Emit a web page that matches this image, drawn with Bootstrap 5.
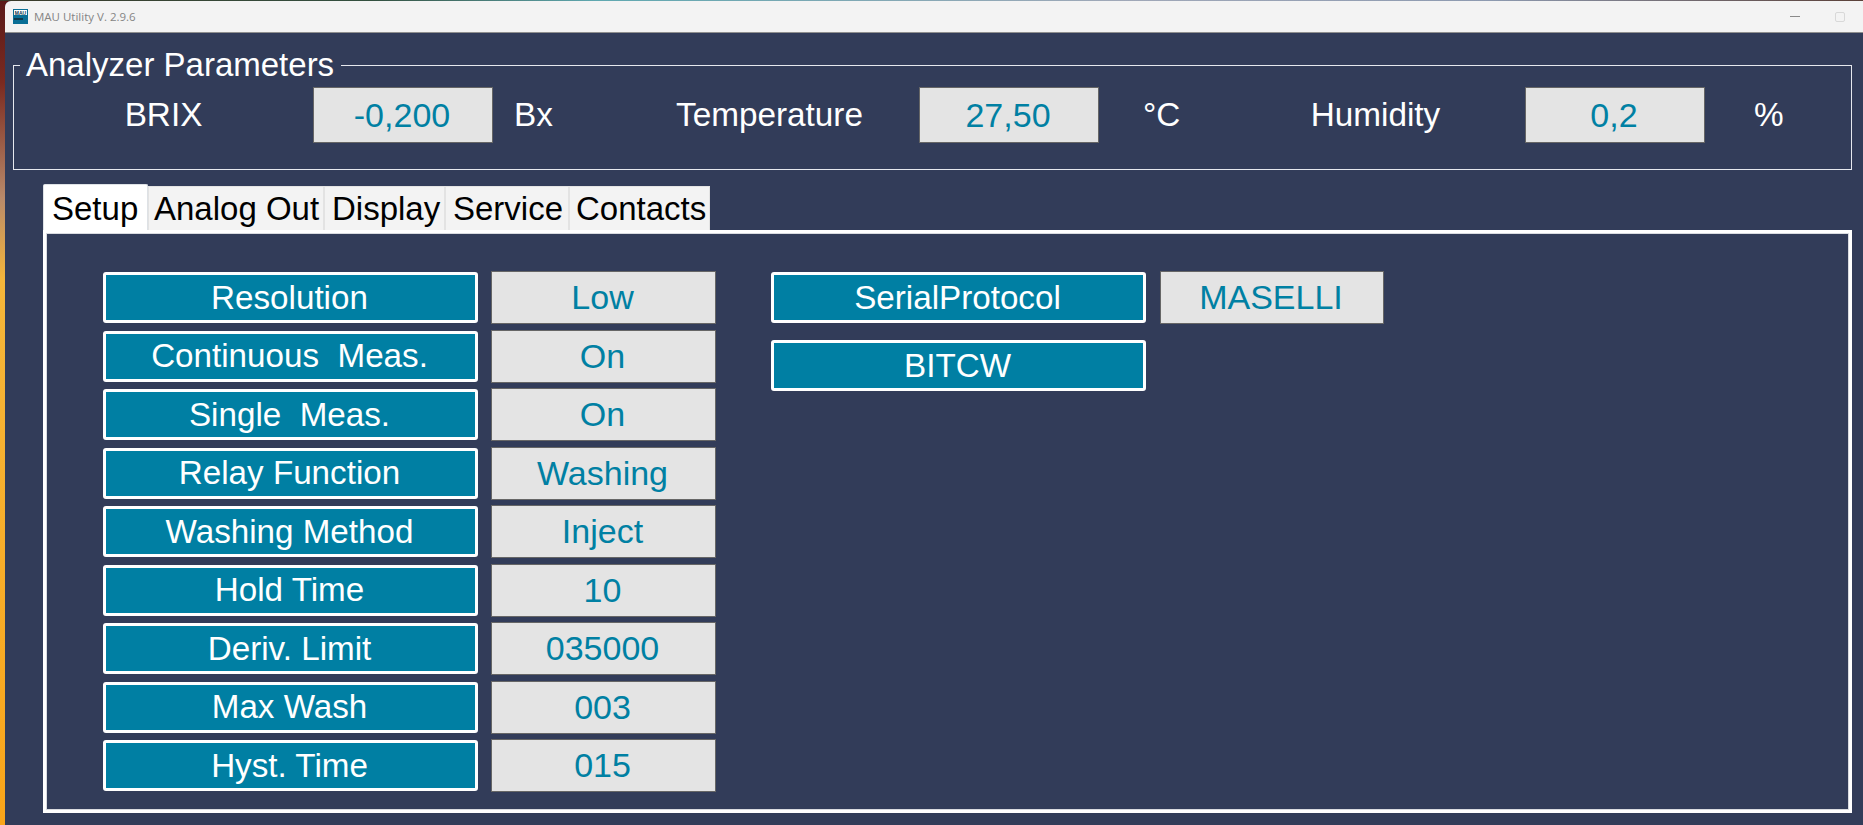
<!DOCTYPE html>
<html lang="en">

<head>
    <meta charset="UTF-8">
    <meta name="viewport" content="width=device-width, initial-scale=1.0">
    <title>MAU Utility V. 2.9.6</title>

    <!-- Bootstrap CSS -->
    <link href="https://cdn.jsdelivr.net/npm/bootstrap@5.3.0/dist/css/bootstrap.min.css" rel="stylesheet">
    <style>
        html, body { height: 100%; }
        body {
            overflow: hidden;
            padding: 1px 0 0 5px;
            background:
                linear-gradient(90deg, #3a3a2a 0, #33503f 20%, #5fa8b0 32%, #a0a8b8 60%, #8d9ab0 80%, #5a4038 100%) 0 0 / 100% 1px no-repeat,
                linear-gradient(180deg, #5a1a1a 0, #7a2a20 10%, #b98a6a 24%, #f5b63a 34%, #f9a51a 100%);
            font-family: "Liberation Sans", Arial, sans-serif;
        }
        .app-window { height: 100%; background: #323c59; border-top-left-radius: 6px; overflow: hidden; }
        .title-bar { height: 32px; background: #f3f3f3; border-bottom: 1px solid #8f8f8f; padding-left: 8px; color: #858585; font: 11.5px "Open Sans", sans-serif; }
        .title-text { margin-left: 2px; }
        .win-min { width: 10px; height: 1px; background: #8a8a8a; margin-right: 35px; }
        .win-max { width: 10px; height: 10px; border: 1px solid #d8d8d8; border-radius: 2px; margin-right: 18px; }

        .params-box {
            margin: 13px 11px 0 8px;
            height: 124px;
            border: 1px solid #e6e8ee;
            padding: 0;
            color: #fff;
            font-size: 33.3px;
            min-width: 0;
        }
        .params-box legend {
            float: none;
            width: auto;
            margin: 0 0 0 6px;
            padding: 0 7px 0 6px;
            font-size: 33px;
            line-height: 38px;
        }
        .params-row {
            display: grid;
            grid-template-columns: 299px 180px 127px 299px 180px 127px 299px 180px auto;
            align-items: center;
            margin-top: 3px;
        }
        .read-box {
            height: 56px;
            background: #e4e4e4;
            border: 1px solid #666;
            color: #0080a3;
            font-size: 34px;
            display: flex;
            align-items: center;
            justify-content: center;
            padding-right: 2px;
        }
        .unit-bx { padding-left: 21px; }
        .unit-c { padding-left: 44px; }
        .unit-pc { padding-left: 49px; }

        .tab-area { margin: 14px 11px 0 38px; }
        .tab-strip { border: 0; align-items: flex-end; height: 46px; }
        .tab-strip .nav-link {
            height: 44px;
            padding: 0 0 0 5px;
            margin: 0;
            background: #f3f3f3;
            color: #000;
            font-size: 33px;
            line-height: 44px;
            border: 1px solid #e3e3e3;
            border-bottom: 0;
            border-radius: 0;
            white-space: nowrap;
        }
        .tab-strip .nav-link.active { height: 46px; background: #fff; color: #000; border-radius: 2px 2px 0 0; padding-left: 8px; line-height: 48px; }
        .tab-strip .nav-item:nth-child(1) .nav-link { width: 105px; }
        .tab-strip .nav-item:nth-child(2) .nav-link { width: 176px; }
        .tab-strip .nav-item:nth-child(3) .nav-link { width: 121px; padding-left: 7px; }
        .tab-strip .nav-item:nth-child(4) .nav-link { width: 124px; padding-left: 7px; }
        .tab-strip .nav-item:nth-child(5) .nav-link { width: 141px; padding-left: 6px; }
        .tab-panel {
            height: 583px;
            border: 3px solid #fff;
            box-shadow: inset 0 0 0 1px #d9dbe0;
            padding: 39px 0 0 57px;
            font-size: 33.2px;
        }
        .tab-columns { display: flex; gap: 56px; }
        .field-col { display: flex; flex-direction: column; }
        .field-line { display: flex; height: 58.5px; }
        .serial-col .field-line { height: 68px; }
        .field-btn {
            width: 375px;
            height: 51px;
            background: #007fa3;
            border: 3px solid #fff;
            border-radius: 3px;
            color: #fff;
            padding: 0 2px 0 0;
            font-size: 33.2px;
            line-height: 1;
        }
        .field-val {
            width: 224px;
            height: 53px;
            margin: -1px 0 0 14px;
        }
        .field-col:first-child .field-val { width: 225px; margin-left: 13px; }
        .serial-col { margin-left: -1px; }
    </style>
</head>
<body>

    <div class="app-window d-flex flex-column">
        <!-- Title bar -->
        <div class="title-bar d-flex align-items-center">
            <svg width="15" height="15" viewBox="0 0 15 15" class="me-1" aria-hidden="true">
                <rect width="15" height="15" fill="#0a6f96"/>
                <rect x="1" y="1" width="13" height="5" fill="#fff"/>
                <text x="7.5" y="5.5" font-size="5" font-weight="700" text-anchor="middle" fill="#12384a" font-family="Liberation Sans">MAU</text>
                <rect x="1" y="9" width="9" height="2" fill="#12384a"/>
            </svg>
            <span class="title-text">MAU Utility V. 2.9.6</span>
            <span class="ms-auto win-min"></span>
            <span class="win-max"></span>
        </div>

        <!-- Analyzer values -->
        <fieldset class="params-box">
            <legend>Analyzer Parameters</legend>
            <div class="params-row">
                <div class="text-center">BRIX</div>
                <div class="read-box">-0,200</div>
                <div class="unit-bx">Bx</div>
                <div class="text-center">Temperature</div>
                <div class="read-box">27,50</div>
                <div class="unit-c">°C</div>
                <div class="text-center">Humidity</div>
                <div class="read-box">0,2</div>
                <div class="unit-pc">%</div>
            </div>
        </fieldset>

        <!-- Tabs -->
        <div class="tab-area">
            <ul class="nav nav-tabs tab-strip">
                <li class="nav-item"><a class="nav-link active" href="#">Setup</a></li>
                <li class="nav-item"><a class="nav-link" href="#">Analog Out</a></li>
                <li class="nav-item"><a class="nav-link" href="#">Display</a></li>
                <li class="nav-item"><a class="nav-link" href="#">Service</a></li>
                <li class="nav-item"><a class="nav-link" href="#">Contacts</a></li>
            </ul>
            <div class="tab-panel">
                <div class="tab-columns">
                    <div class="field-col">
                        <div class="field-line"><button class="field-btn">Resolution</button><div class="read-box field-val">Low</div></div>
                        <div class="field-line"><button class="field-btn">Continuous&nbsp; Meas.</button><div class="read-box field-val">On</div></div>
                        <div class="field-line"><button class="field-btn">Single&nbsp; Meas.</button><div class="read-box field-val">On</div></div>
                        <div class="field-line"><button class="field-btn">Relay Function</button><div class="read-box field-val">Washing</div></div>
                        <div class="field-line"><button class="field-btn">Washing Method</button><div class="read-box field-val">Inject</div></div>
                        <div class="field-line"><button class="field-btn">Hold Time</button><div class="read-box field-val">10</div></div>
                        <div class="field-line"><button class="field-btn">Deriv. Limit</button><div class="read-box field-val">035000</div></div>
                        <div class="field-line"><button class="field-btn">Max Wash</button><div class="read-box field-val">003</div></div>
                        <div class="field-line"><button class="field-btn">Hyst. Time</button><div class="read-box field-val">015</div></div>
                    </div>
                    <div class="field-col serial-col">
                        <div class="field-line"><button class="field-btn">SerialProtocol</button><div class="read-box field-val">MASELLI</div></div>
                        <div class="field-line"><button class="field-btn">BITCW</button></div>
                    </div>
                </div>
            </div>
        </div>
    </div>

</body>
</html>
